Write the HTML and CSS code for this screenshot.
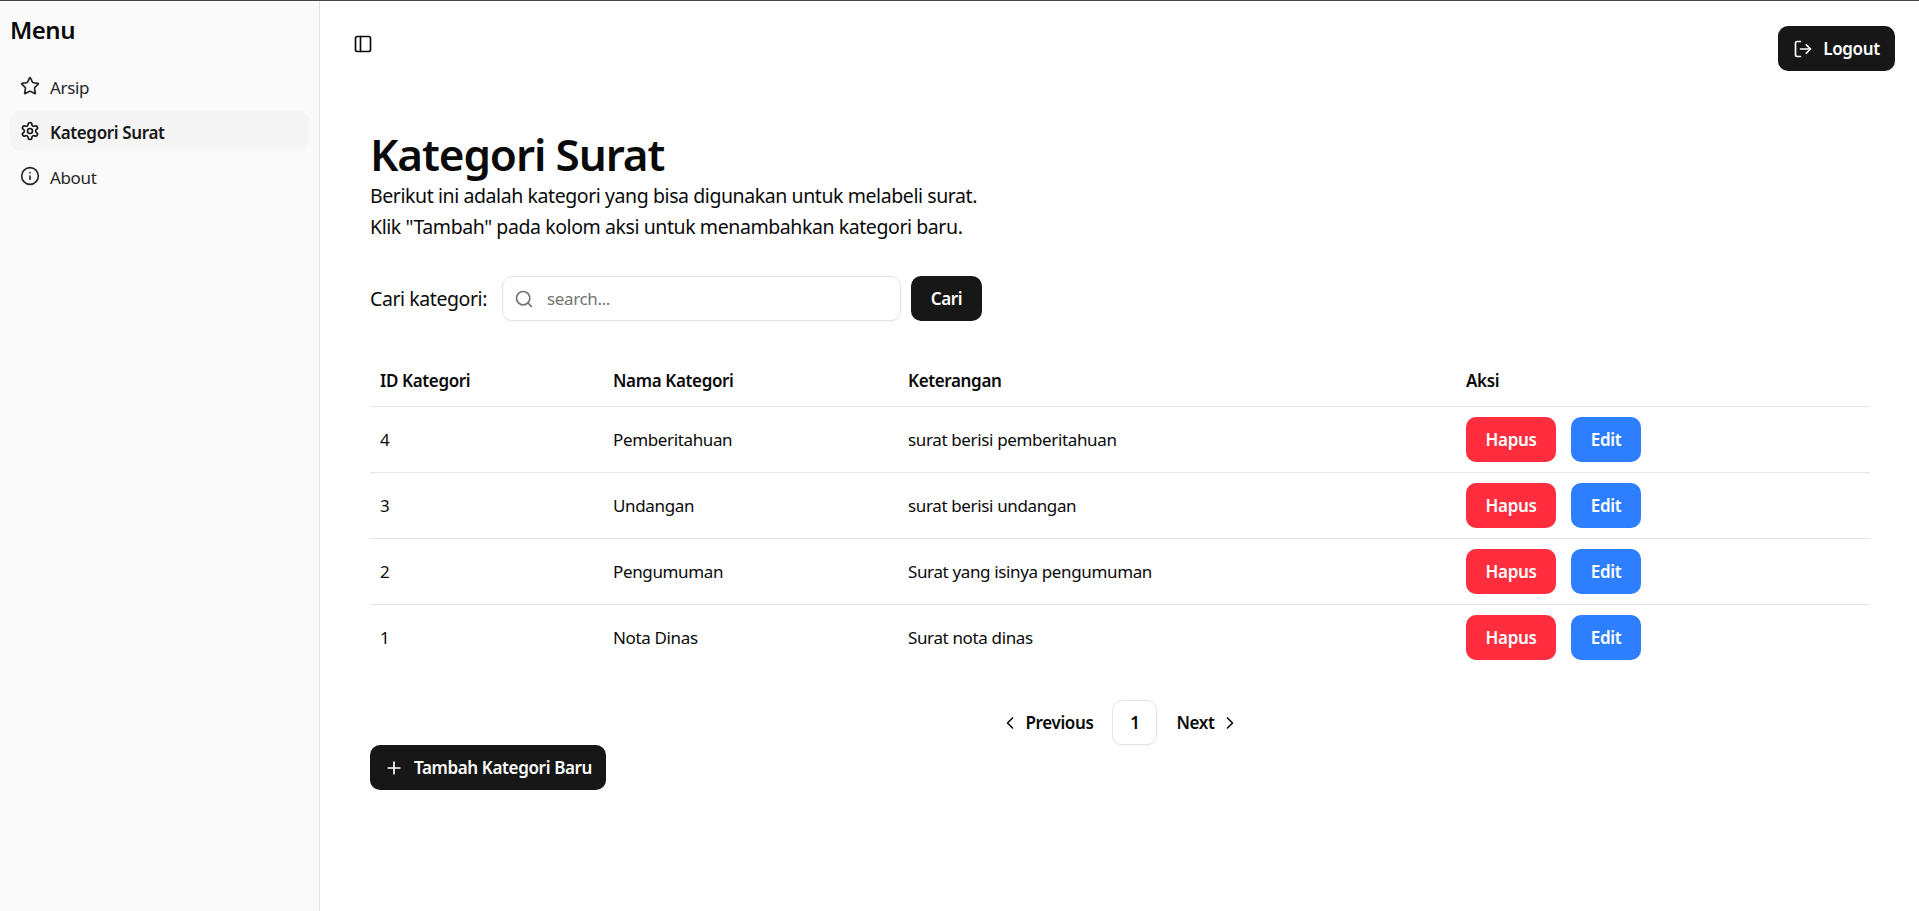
FILE: index.html
```html
<!DOCTYPE html>
<html lang="id">
<head>
  <meta charset="UTF-8">
  <title>Kategori Surat</title>
  <link rel="stylesheet" href="styles.css">
</head>
<body>
  <div class="layout">
    <aside class="sidebar">
      <h2 class="sidebar-title">Menu</h2>
      <nav class="sidebar-nav">
        <a class="nav-item" href="#">
          <svg class="icon" viewBox="0 0 24 24"><path d="M11.525 2.295a.53.53 0 0 1 .95 0l2.31 4.679a2.123 2.123 0 0 0 1.595 1.16l5.166.756a.53.53 0 0 1 .294.904l-3.736 3.638a2.123 2.123 0 0 0-.611 1.878l.882 5.14a.53.53 0 0 1-.771.56l-4.618-2.428a2.122 2.122 0 0 0-1.973 0L6.396 21.01a.53.53 0 0 1-.77-.56l.881-5.139a2.122 2.122 0 0 0-.611-1.879L2.16 9.795a.53.53 0 0 1 .294-.906l5.165-.755a2.122 2.122 0 0 0 1.597-1.16z"/></svg>
          <span>Arsip</span>
        </a>
        <a class="nav-item active" href="#">
          <svg class="icon" viewBox="0 0 24 24"><path d="M12.22 2h-.44a2 2 0 0 0-2 2v.18a2 2 0 0 1-1 1.73l-.43.25a2 2 0 0 1-2 0l-.15-.08a2 2 0 0 0-2.73.73l-.22.38a2 2 0 0 0 .73 2.73l.15.1a2 2 0 0 1 1 1.72v.51a2 2 0 0 1-1 1.74l-.15.09a2 2 0 0 0-.73 2.73l.22.38a2 2 0 0 0 2.73.73l.15-.08a2 2 0 0 1 2 0l.43.25a2 2 0 0 1 1 1.73V20a2 2 0 0 0 2 2h.44a2 2 0 0 0 2-2v-.18a2 2 0 0 1 1-1.73l.43-.25a2 2 0 0 1 2 0l.15.08a2 2 0 0 0 2.73-.73l.22-.39a2 2 0 0 0-.73-2.73l-.15-.08a2 2 0 0 1-1-1.74v-.5a2 2 0 0 1 1-1.74l.15-.09a2 2 0 0 0 .73-2.73l-.22-.38a2 2 0 0 0-2.73-.73l-.15.08a2 2 0 0 1-2 0l-.43-.25a2 2 0 0 1-1-1.73V4a2 2 0 0 0-2-2z"/><circle cx="12" cy="12" r="3"/></svg>
          <span>Kategori Surat</span>
        </a>
        <a class="nav-item" href="#">
          <svg class="icon" viewBox="0 0 24 24"><circle cx="12" cy="12" r="10"/><path d="M12 16v-4"/><path d="M12 8h.01"/></svg>
          <span>About</span>
        </a>
      </nav>
    </aside>

    <main class="main">
      <header class="topbar">
        <button class="toggle-btn" aria-label="Toggle Sidebar">
          <svg class="icon" viewBox="0 0 24 24"><rect width="18" height="18" x="3" y="3" rx="2"/><path d="M9 3v18"/></svg>
        </button>
        <button class="btn btn-dark btn-logout">
          <svg class="icon" viewBox="0 0 24 24"><path d="M9 21H5a2 2 0 0 1-2-2V5a2 2 0 0 1 2-2h4"/><path d="m16 17 5-5-5-5"/><path d="M21 12H9"/></svg>
          Logout
        </button>
      </header>

      <section class="content">
        <h1 class="page-title">Kategori Surat</h1>
        <p class="page-desc">Berikut ini adalah kategori yang bisa digunakan untuk melabeli surat.</p>
        <p class="page-desc">Klik "Tambah" pada kolom aksi untuk menambahkan kategori baru.</p>

        <form class="search-row">
          <label class="search-label" for="search">Cari kategori:</label>
          <div class="search-box">
            <svg class="icon" viewBox="0 0 24 24"><path d="m21 21-4.34-4.34"/><circle cx="11" cy="11" r="8"/></svg>
            <input id="search" type="text" placeholder="search...">
          </div>
          <button class="btn btn-dark btn-search" type="button">Cari</button>
        </form>

        <table class="data-table">
          <colgroup>
            <col class="col-id"><col class="col-name"><col class="col-desc"><col class="col-action">
          </colgroup>
          <thead>
            <tr><th>ID Kategori</th><th>Nama Kategori</th><th>Keterangan</th><th>Aksi</th></tr>
          </thead>
          <tbody>
            <tr>
              <td>4</td><td>Pemberitahuan</td><td>surat berisi pemberitahuan</td>
              <td><div class="actions"><button class="btn btn-red">Hapus</button><button class="btn btn-blue">Edit</button></div></td>
            </tr>
            <tr>
              <td>3</td><td>Undangan</td><td>surat berisi undangan</td>
              <td><div class="actions"><button class="btn btn-red">Hapus</button><button class="btn btn-blue">Edit</button></div></td>
            </tr>
            <tr>
              <td>2</td><td>Pengumuman</td><td>Surat yang isinya pengumuman</td>
              <td><div class="actions"><button class="btn btn-red">Hapus</button><button class="btn btn-blue">Edit</button></div></td>
            </tr>
            <tr>
              <td>1</td><td>Nota Dinas</td><td>Surat nota dinas</td>
              <td><div class="actions"><button class="btn btn-red">Hapus</button><button class="btn btn-blue">Edit</button></div></td>
            </tr>
          </tbody>
        </table>

        <nav class="pagination">
          <a class="page-link" href="#">
            <svg class="icon" viewBox="0 0 24 24"><path d="m15 18-6-6 6-6"/></svg>
            Previous
          </a>
          <a class="page-num" href="#">1</a>
          <a class="page-link" href="#">
            Next
            <svg class="icon" viewBox="0 0 24 24"><path d="m9 18 6-6-6-6"/></svg>
          </a>
        </nav>

        <button class="btn btn-dark btn-add">
          <svg class="icon" viewBox="0 0 24 24"><path d="M5 12h14"/><path d="M12 5v14"/></svg>
          Tambah Kategori Baru
        </button>
      </section>
    </main>
  </div>
</body>
</html>
```

FILE: styles.css
```css
* {
  box-sizing: border-box;
}

html, body {
  margin: 0;
  padding: 0;
  height: 100%;
  background-color: #fff;
  color: #0a0a0a;
  font-family: "Noto Sans", "Open Sans", sans-serif;
  overflow: hidden;
}

body {
  border-top: 1px solid #444;
}

a {
  color: inherit;
  text-decoration: none;
}

.icon {
  width: 20px;
  height: 20px;
  flex-shrink: 0;
  fill: none;
  stroke: currentColor;
  stroke-width: 2;
  stroke-linecap: round;
  stroke-linejoin: round;
}

.layout {
  display: flex;
  height: 100%;
}

/* sidebar */
.sidebar {
  width: 320px;
  flex-shrink: 0;
  padding: 0 10px;
  background-color: #fafafa;
  border-right: 1px solid #e5e5e5;
}

.sidebar-title {
  margin: 0;
  padding-top: 14px;
  height: 65px;
  font-size: 24px;
  line-height: 30px;
  font-weight: 600;
  letter-spacing: -0.5px;
}

.sidebar-nav {
  display: flex;
  flex-direction: column;
  gap: 5px;
}

.nav-item {
  display: flex;
  align-items: center;
  gap: 10px;
  height: 40px;
  padding: 0 10px;
  border-radius: 10px;
  font-size: 17px;
  letter-spacing: -0.36px;
  color: #262626;
}

.nav-item span {
  padding-top: 2px;
}

.nav-item.active {
  background-color: #f5f5f5;
  font-weight: 600;
  color: #171717;
}

/* main */
.main {
  flex: 1;
  min-width: 0;
}

.topbar {
  display: flex;
  justify-content: space-between;
  align-items: flex-start;
  padding: 25px 24px 0 25px;
  height: 127px;
}

.toggle-btn {
  display: flex;
  align-items: center;
  justify-content: center;
  width: 35px;
  height: 35px;
  padding: 0;
  border: none;
  background: none;
  color: #0a0a0a;
}

.content {
  padding: 0 49px 0 50px;
}

.page-title {
  margin: 0;
  font-size: 44px;
  line-height: 52px;
  font-weight: 600;
  letter-spacing: -1.1px;
}

.page-desc {
  margin: 0;
  font-size: 19.5px;
  line-height: 31px;
  letter-spacing: -0.42px;
}

.search-row {
  display: flex;
  align-items: center;
  gap: 10px;
  margin-top: 34px;
}

.search-label {
  width: 122px;
  font-size: 19.5px;
  letter-spacing: -0.42px;
  white-space: nowrap;
}

.search-box {
  display: flex;
  align-items: center;
  gap: 13px;
  width: 399px;
  height: 45px;
  padding: 0 11px;
  border: 1px solid #e5e5e5;
  border-radius: 10px;
  box-shadow: 0 1px 2px rgba(0, 0, 0, 0.05);
  color: #737373;
}

.search-box input {
  flex: 1;
  min-width: 0;
  border: none;
  outline: none;
  padding: 0;
  font-family: inherit;
  font-size: 17px;
  letter-spacing: -0.36px;
}

.search-box input::placeholder {
  color: #737373;
}

.btn {
  display: inline-flex;
  align-items: center;
  justify-content: center;
  gap: 10px;
  height: 45px;
  padding: 0 15px;
  border: none;
  border-radius: 10px;
  color: #fff;
  font-family: inherit;
  font-size: 17px;
  font-weight: 600;
  letter-spacing: -0.36px;
  white-space: nowrap;
}

.btn-dark {
  background-color: #171717;
}

.btn-logout {
  width: 117px;
}

.btn-search {
  width: 71px;
}

.btn-red {
  width: 90px;
  background-color: #ff2d3d;
}

.btn-blue {
  width: 70px;
  background-color: #2e7fff;
}

.btn-add {
  width: 236px;
}

/* table */
.data-table {
  width: 100%;
  margin-top: 35px;
  border-collapse: collapse;
  table-layout: fixed;
  font-size: 17px;
  letter-spacing: -0.36px;
}

.col-id { width: 233px; }
.col-name { width: 295px; }
.col-desc { width: 558px; }

.data-table th {
  height: 50px;
  padding: 0 10px;
  text-align: left;
  font-weight: 600;
  border-bottom: 1px solid #e5e5e5;
}

.data-table td {
  height: 66px;
  padding: 10px;
  border-bottom: 1px solid #e5e5e5;
}

.data-table tbody tr:last-child td {
  border-bottom: none;
}

.actions {
  display: flex;
  gap: 15px;
}

/* pagination */
.pagination {
  display: flex;
  justify-content: center;
  align-items: center;
  gap: 7px;
  margin-top: 30px;
  font-size: 17px;
  font-weight: 600;
  letter-spacing: -0.36px;
}

.page-link {
  display: flex;
  align-items: center;
  gap: 5px;
  height: 45px;
  padding: 0 12px;
}

.page-num {
  display: flex;
  align-items: center;
  justify-content: center;
  width: 45px;
  height: 45px;
  border: 1px solid #e5e5e5;
  border-radius: 10px;
  box-shadow: 0 1px 2px rgba(0, 0, 0, 0.05);
}
```
